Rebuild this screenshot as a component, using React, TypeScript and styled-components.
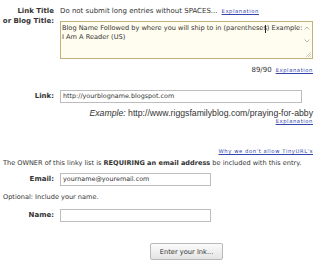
import React from "react";
import styled, { createGlobalStyle } from "styled-components";

const Global = createGlobalStyle`
  html, body { margin: 0; padding: 0; background: #fff; }
  body { width: 320px; height: 268px; overflow: hidden; font-family: "DejaVu Sans", Verdana, sans-serif; color: #333; }
`;

const Page = styled.div`
  padding: 6px 7px 0 0;
  display: flex;
  flex-direction: column;
`;

const Row = styled.div<{ $mt?: number }>`
  display: grid;
  grid-template-columns: 54px 1fr;
  column-gap: 6px;
  align-items: start;
  margin-top: ${(p) => p.$mt ?? 0}px;
`;

const Label = styled.div<{ $pt?: number }>`
  display: flex;
  flex-direction: column;
  align-items: flex-end;
  font-weight: bold;
  font-size: 7px;
  line-height: 10px;
  white-space: nowrap;
  color: #333;
  padding-top: ${(p) => p.$pt ?? 0}px;
`;

const Hint = styled.div`
  font-size: 7px;
  line-height: 10px;
  white-space: nowrap;
`;

const Link = styled.a`
  font-size: 5.3px;
  letter-spacing: 0.55px;
  color: #3344aa;
  text-decoration: underline;
  margin-left: 4px;
`;

const TextArea = styled.div`
  position: relative;
  box-sizing: border-box;
  height: 38px;
  width: 253px;
  margin-top: 5px;
  border: 1px solid #c4b07a;
  background: #fffdf0;
  font-size: 6.6px;
  line-height: 8.5px;
  padding: 2px 6px 0 1px;
  color: #333;
`;

const Caret = styled.div`
  position: absolute;
  left: 204px;
  top: 3px;
  width: 1px;
  height: 8px;
  background: #222;
`;

const Scroll = styled.div`
  position: absolute;
  right: 1px;
  top: 2px;
  display: flex;
  flex-direction: column;
  gap: 5px;
`;

const Grip = styled.svg`
  position: absolute;
  right: 1px;
  bottom: 1px;
`;

const Right = styled.div<{ $mt?: number; $size?: number; $font?: string }>`
  text-align: right;
  margin-top: ${(p) => p.$mt ?? 0}px;
  font-size: ${(p) => p.$size ?? 7}px;
  line-height: 10px;
  white-space: nowrap;
  font-family: ${(p) => p.$font ?? "inherit"};
`;

const Input = styled.div<{ $w: number }>`
  box-sizing: border-box;
  width: ${(p) => p.$w}px;
  height: 13px;
  border: 1px solid #bdbdbd;
  font-size: 6.4px;
  line-height: 11px;
  padding-left: 2px;
  color: #333;
  white-space: nowrap;
`;

const Para = styled.div<{ $mt?: number }>`
  font-size: 6.57px;
  line-height: 10px;
  padding-left: 3px;
  margin-top: ${(p) => p.$mt ?? 0}px;
  white-space: nowrap;
`;

const ButtonRow = styled.div`
  display: grid;
  grid-template-columns: 54px 1fr;
  column-gap: 6px;
  margin-top: 21px;
`;

const Button = styled.button`
  justify-self: center;
  box-sizing: border-box;
  width: 73px;
  height: 17px;
  border: 1px solid #b9b9b9;
  border-radius: 2px;
  background: linear-gradient(#fbfbfb, #e4e4e4);
  font-family: "DejaVu Sans", Verdana, sans-serif;
  font-size: 6.7px;
  color: #333;
  padding: 0;
`;

const Arrow = ({ up }: { up?: boolean }) => (
  <svg width="8" height="8" viewBox="0 0 8 8">
    <path
      d={up ? "M1.5 5.5 L4 3 L6.5 5.5" : "M1.5 2.5 L4 5 L6.5 2.5"}
      fill="none"
      stroke="#b8b8b8"
      strokeWidth="1"
    />
  </svg>
);

export default function App() {
  return (
    <>
      <Global />
      <Page>
        <Row>
          <Label>
            <span>Link Title</span>
            <span>or Blog Title:</span>
          </Label>
          <div>
            <Hint>
              Do not submit long entries without SPACES...<Link>Explanation</Link>
            </Hint>
            <TextArea>
              Blog Name Followed by where you will ship to in (parentheses) Example: I Am A Reader (US)
              <Caret />
              <Scroll>
                <Arrow up />
                <Arrow />
              </Scroll>
              <Grip width="5" height="5" viewBox="0 0 5 5">
                <path d="M0 5 L5 0 M2 5 L5 2 M4 5 L5 4" stroke="#b0b0b0" strokeWidth="0.6" />
              </Grip>
            </TextArea>
          </div>
        </Row>
        <Right $mt={6}>
          89/90<Link>Explanation</Link>
        </Right>
        <Row $mt={15}>
          <Label $pt={1}>Link:</Label>
          <Input $w={242}>http://yourblogname.blogspot.com</Input>
        </Row>
        <Right $mt={5} $size={8.7} $font={'"Liberation Sans", Arial, sans-serif'}>
          <i>Example:</i> http://www.riggsfamilyblog.com/praying-for-abby
        </Right>
        <Right $mt={-2}>
          <Link>Explanation</Link>
        </Right>
        <Right $mt={20}>
          <Link>Why we don't allow TinyURL's</Link>
        </Right>
        <Para $mt={2}>
          The OWNER of this linky list is <b>REQUIRING an email address</b> be included with this entry.
        </Para>
        <Row $mt={5}>
          <Label $pt={1}>Email:</Label>
          <Input $w={151}>yourname@youremail.com</Input>
        </Row>
        <Para $mt={6}>Optional: Include your name.</Para>
        <Row $mt={7}>
          <Label $pt={1}>Name:</Label>
          <Input $w={151} />
        </Row>
        <ButtonRow>
          <span />
          <Button>Enter your lnk...</Button>
        </ButtonRow>
      </Page>
    </>
  );
}
